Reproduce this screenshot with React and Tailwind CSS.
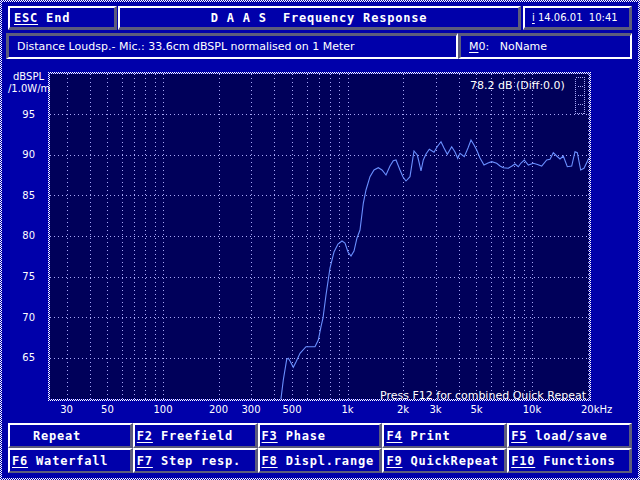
const RAISED =
  'border-t-2 border-l-2 border-t-white border-l-white border-b-[3px] border-r-[3px] border-b-[#5c5c7c] border-r-[#5c5c7c]';
const INSET =
  'border-t-[3px] border-l-[3px] border-t-[#5c5c7c] border-l-[#5c5c7c] border-b-2 border-r-2 border-b-white border-r-white';
const KEY =
  'border-t-2 border-l-2 border-t-white border-l-white border-b-2 border-r-[3px] border-b-[#5c5c7c] border-r-[#5c5c7c]';

const BOLD = "font-['DejaVu_Sans_Mono',monospace] font-bold text-[12px] tracking-[0.8px] leading-none";
const SMALL = "font-['DejaVu_Sans',sans-serif] text-[11px] leading-none";

const FONT = 'DejaVu Sans, sans-serif';

// log frequency -> x, dB -> y (page coordinates)
const fx = (f) => 163 + 184.5 * Math.log10(f / 100);
const dy = (db) => 114 + (95 - db) * 8.13;

const GRID_F = [];
[10, 100, 1000].forEach((d) => {
  for (let i = 1; i <= 9; i++) {
    const f = d * i;
    if (f >= 30) GRID_F.push(f);
  }
});
GRID_F.push(10000, 20000);

const DB_TICKS = [95, 90, 85, 80, 75, 70, 65];

const X_LABELS = [
  ['30', 30],
  ['50', 50],
  ['100', 100],
  ['200', 200],
  ['300', 300],
  ['500', 500],
  ['1k', 1000],
  ['2k', 2000],
  ['3k', 3000],
  ['5k', 5000],
  ['10k', 10000],
];

const CURVE = [
  [280.7, 401], [283.3, 380], [286.7, 359.3], [288.3, 358.3], [290, 361], [293.3, 367.3],
  [296, 362], [300, 353.3], [306, 346.7], [315, 346.7], [318.3, 340], [321, 326.7],
  [323, 318], [326, 295], [330, 268], [334, 252], [338, 244], [342, 241], [345, 243],
  [348, 252], [351, 256], [354, 251], [357, 238], [360, 230], [363.3, 203.3], [366, 190],
  [370, 176.7], [374, 170], [378.3, 167.7], [382, 170], [386, 175], [390, 166],
  [393.3, 160.7], [396, 160], [400, 170], [403, 177], [406, 181], [410, 176.7],
  [414, 151], [417.3, 155], [419, 162], [421, 171], [423.3, 160], [426, 154],
  [429.3, 149.3], [434, 152.3], [437, 147], [441, 141.7], [444, 148], [447.3, 154.3],
  [451.7, 146.7], [455, 152], [457.7, 158.3], [460, 153.3], [464.3, 156.7], [468, 148],
  [471, 140], [474, 145], [476.7, 150], [480, 158], [484, 165], [488, 163],
  [491.7, 161.7], [496.7, 163.3], [500, 166], [503.3, 167.7], [508.3, 168.3], [512, 166],
  [515, 164], [518.3, 166.7], [521, 163], [524.3, 160], [528.3, 165], [533.3, 163.3],
  [536.7, 164.3], [541.7, 166], [546.7, 160], [550, 159.3], [553.3, 152.7], [556.7, 156],
  [560, 159], [563.3, 156], [567.3, 166.7], [571.7, 166], [575, 151.7], [577.3, 152.7],
  [580.7, 170], [584, 168.3], [588.3, 159.3], [590, 159.3],
];

function Key({ k, label, className = '' }) {
  return (
    <span className={className}>
      <span className="underline underline-offset-2 decoration-1">{k}</span>
      {label}
    </span>
  );
}

function TopBar() {
  return (
    <div className="flex h-[24px] mt-[4px] ml-[6px]">
      <div className={`${RAISED} w-[109px] flex items-center pl-[4px] ${BOLD}`}>
        <Key k="ESC" label=" End" className="whitespace-pre" />
      </div>
      <div className={`${RAISED} w-[403px] ml-[1px] flex items-center justify-center ${BOLD} whitespace-pre`}>
        D A A S  Frequency Response
      </div>
      <div className={`${RAISED} w-[109px] ml-[2px] flex items-center pl-[7px] font-['DejaVu_Sans',sans-serif] text-[10px] leading-none whitespace-pre`}>
        <Key k="i" label=" 14.06.01  10:41" />
      </div>
    </div>
  );
}

function InfoBar() {
  return (
    <div className="flex h-[26px] mt-[3px] ml-[4px]">
      <div className={`${INSET} w-[452px] flex items-center pl-[8px] ${SMALL}`}>
        Distance Loudsp.- Mic.: 33.6cm dBSPL normalised on 1 Meter
      </div>
      <div className={`${INSET} w-[174px] flex items-center pl-[8px] ${SMALL} whitespace-pre`}>
        <Key k="M" label="0:   NoName" />
      </div>
    </div>
  );
}

function Chart() {
  const pts = CURVE.map((p) => p.join(',')).join(' ');
  return (
    <svg width="636" height="362" viewBox="2 59 636 362" className="block">
      <defs>
        <pattern id="dither" width="2" height="2" patternUnits="userSpaceOnUse">
          <rect width="2" height="2" fill="#0000aa" />
          <rect width="1" height="1" fill="#ffffff" />
          <rect x="1" y="1" width="1" height="1" fill="#ffffff" />
        </pattern>
        <clipPath id="plot">
          <rect x="50" y="74" width="539" height="325" />
        </clipPath>
      </defs>

      {/* frame */}
      <rect x="48" y="72" width="543" height="329" fill="url(#dither)" />
      <rect x="50" y="74" width="539" height="325" fill="#00005a" />

      {/* grid */}
      <g stroke="#a8a8f8" strokeWidth="1" shapeRendering="crispEdges">
        {GRID_F.map((f) => {
          const x = Math.round(fx(f)) + 0.5;
          return <line key={f} x1={x} x2={x} y1="74" y2="399" strokeDasharray="1 3" />;
        })}
        {DB_TICKS.map((d) => {
          const y = Math.round(dy(d)) + 0.5;
          return <line key={d} x1="50" x2="589" y1={y} y2={y} strokeDasharray="1 3" />;
        })}
      </g>

      {/* legend marker */}
      <g stroke="#a8a8f8" strokeWidth="1" fill="none" strokeDasharray="1 1" shapeRendering="crispEdges">
        <rect x="575.5" y="77.5" width="9" height="36" />
        <line x1="577.5" x2="582.5" y1="86.5" y2="86.5" />
        <line x1="577.5" x2="582.5" y1="95.5" y2="95.5" />
        <line x1="577.5" x2="582.5" y1="104.5" y2="104.5" />
      </g>

      {/* curve */}
      <polyline points={pts} fill="none" stroke="#6a8fff" strokeWidth="1.1" clipPath="url(#plot)" />

      {/* texts */}
      <g fill="#ffffff" fontFamily={FONT} fontSize="10">
        <text x="13" y="79.5">dBSPL</text>
        <text x="8" y="91.5">/1.0W/m</text>
        {DB_TICKS.map((d) => (
          <text key={d} x="35" y={dy(d) + 3.5} textAnchor="end">
            {d}
          </text>
        ))}
        {X_LABELS.map(([t, f]) => (
          <text key={t} x={fx(f)} y="413" textAnchor="middle">
            {t}
          </text>
        ))}
        <text x="581" y="413">20kHz</text>
      </g>
      <g fill="#ffffff" fontFamily={FONT} fontSize="11">
        <text x="470" y="89">78.2 dB (Diff:0.0)</text>
        <text x="380" y="399">Press F12 for combined Quick Repeat</text>
      </g>
    </svg>
  );
}

const KEYS = [
  ['', 'Repeat'],
  ['F2', ' Freefield'],
  ['F3', ' Phase'],
  ['F4', ' Print'],
  ['F5', ' load/save'],
  ['F6', ' Waterfall'],
  ['F7', ' Step resp.'],
  ['F8', ' Displ.range'],
  ['F9', ' QuickRepeat'],
  ['F10', ' Functions'],
];

function FunctionKeys() {
  return (
    <div className="grid grid-cols-5 w-[624px] ml-[6px] mt-[2px]">
      {KEYS.map(([k, label]) => (
        <div
          key={label}
          className={`${KEY} h-[25px] flex items-center ${k ? 'pl-[2px]' : 'pl-[23px]'} ${BOLD} whitespace-pre`}
        >
          {k ? <Key k={k} label={label} /> : label}
        </div>
      ))}
    </div>
  );
}

export default function App() {
  return (
    <div className="w-[640px] h-[480px] p-[2px] bg-[image:repeating-conic-gradient(#ffffff_0_25%,#0000aa_0_50%)] bg-[length:2px_2px]">
      <div className="w-full h-full bg-[#0000aa] flex flex-col text-white overflow-hidden">
        <TopBar />
        <InfoBar />
        <Chart />
        <FunctionKeys />
      </div>
    </div>
  );
}
